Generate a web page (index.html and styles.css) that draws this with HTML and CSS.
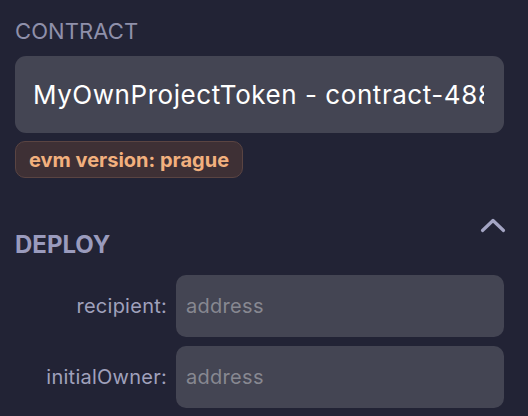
FILE: index.html
```html
<!DOCTYPE html>
<html>
<head>
<meta charset="utf-8">
<link rel="stylesheet" href="styles.css">
</head>
<body>
<div class="panel">
  <div class="section-label">CONTRACT</div>
  <div class="select"><span class="select-text">MyOwnProjectToken - contract-4884a8d1f</span></div>
  <div class="badge">evm version: prague</div>
  <div class="deploy-head">
    <span class="deploy-title">DEPLOY</span>
    <svg class="chevron" width="26" height="16" viewBox="0 0 26 16"><path d="M2.5 13.5 L13 3.5 L23.5 13.5" fill="none" stroke="#a4a5c4" stroke-width="3.2" stroke-linecap="round" stroke-linejoin="round"/></svg>
  </div>
  <div class="params">
    <div class="param">
      <label class="param-label">recipient:</label>
      <div class="param-input">address</div>
    </div>
    <div class="param">
      <label class="param-label">initialOwner:</label>
      <div class="param-input">address</div>
    </div>
  </div>
</div>
</body>
</html>
```
FILE: styles.css
```css
html, body {
  margin: 0;
  padding: 0;
  background: #222335;
  overflow: hidden;
}
.panel {
  width: 528px;
  height: 416px;
  box-sizing: border-box;
  padding: 18px 24px 0 15px;
  font-family: Inter, "Noto Sans", sans-serif;
}
.section-label {
  color: #8f90aa;
  font-size: 22px;
  line-height: 26px;
  letter-spacing: 0.1px;
}
.select {
  margin-top: 12px;
  height: 77px;
  background: #444553;
  border-radius: 11px;
  display: flex;
  align-items: center;
  padding: 0 20px 0 18px;
  overflow: hidden;
}
.select-text {
  color: #ffffff;
  font-size: 26px;
  letter-spacing: 0.55px;
  white-space: nowrap;
  overflow: hidden;
}
.badge {
  margin-top: 8px;
  display: inline-flex;
  align-items: center;
  height: 35px;
  padding: 0 13px 0 13px;
  background: #3e3035;
  border: 1px solid #5a4442;
  border-radius: 10px;
  color: #f2b07e;
  font-weight: 700;
  font-size: 20px;
  letter-spacing: 0;
}
.deploy-head {
  margin-top: 40px;
  display: flex;
  justify-content: space-between;
  align-items: flex-start;
}
.deploy-title {
  color: #9a9bbd;
  font-weight: 700;
  font-size: 24px;
  line-height: 28px;
  margin-top: 13px;
}
.chevron {
  margin-top: -1px;
  margin-right: -2px;
}
.params {
  margin-top: 16px;
  display: flex;
  flex-direction: column;
  gap: 9px;
}
.param {
  display: flex;
  align-items: center;
  gap: 9px;
}
.param-label {
  width: 152px;
  text-align: right;
  color: #a0a1bc;
  font-size: 20px;
  letter-spacing: 0.25px;
}
.param-input {
  flex: 1;
  height: 62px;
  background: #444553;
  border-radius: 10px;
  display: flex;
  align-items: center;
  padding: 0 10px;
  color: #878891;
  font-size: 20px;
  letter-spacing: 0.3px;
}
```
